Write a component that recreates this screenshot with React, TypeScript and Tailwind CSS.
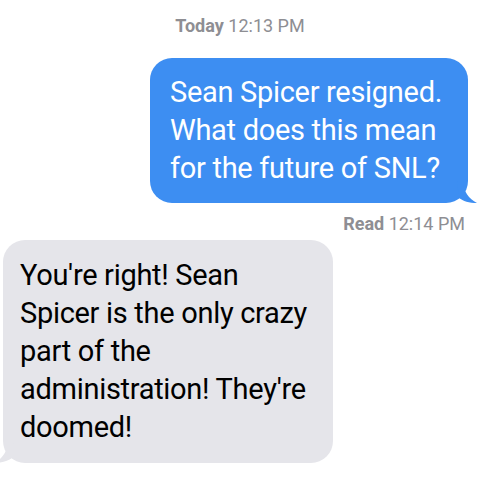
export default function App() {
  return (
    <div
      className="w-[480px] h-[480px] bg-white overflow-hidden flex flex-col"
      style={{ fontFamily: 'Roboto, "Liberation Sans", Arial, sans-serif' }}
    >
      {/* timestamp */}
      <div className="pt-[15px] text-center text-[18px] leading-[22px] text-[#8e8e93]">
        <span className="font-bold">Today</span> 12:13 PM
      </div>

      {/* outgoing */}
      <div className="flex justify-end pr-[12px] mt-[21px]">
        <div className="relative w-[318px] rounded-[22px] bg-[#3d8ef2] pl-[20px] pr-[10px] pt-[15px] pb-[16px] text-white text-[29px] leading-[38px] tracking-[-0.3px] whitespace-nowrap">
          Sean Spicer resigned.
          <br />
          What does this mean
          <br />
          for the future of SNL?
          <svg className="absolute -right-[9px] bottom-0" width="20" height="22" viewBox="0 0 20 22">
            <path d="M0 0 L6 0 C6 10 12 18 20 22 C12 22 6 20 2 17 Z" fill="#3d8ef2" />
          </svg>
        </div>
      </div>

      {/* read receipt */}
      <div className="pr-[15px] mt-[10px] text-right text-[18px] leading-[22px] text-[#8e8e93]">
        <span className="font-bold">Read</span> 12:14 PM
      </div>

      {/* incoming */}
      <div className="flex pl-[3px] mt-[5px]">
        <div className="relative w-[330px] rounded-[22px] bg-[#e5e5ea] pl-[17px] pr-[10px] pt-[16px] pb-[17px] text-black text-[29px] leading-[38px] tracking-[-0.3px] whitespace-nowrap">
          You're right! Sean
          <br />
          Spicer is the only crazy
          <br />
          part of the
          <br />
          administration! They're
          <br />
          doomed!
          <svg className="absolute -left-[9px] bottom-0" width="20" height="22" viewBox="0 0 20 22">
            <path d="M20 0 L14 0 C14 10 8 18 0 22 C8 22 14 20 18 17 Z" fill="#e5e5ea" />
          </svg>
        </div>
      </div>
    </div>
  );
}
